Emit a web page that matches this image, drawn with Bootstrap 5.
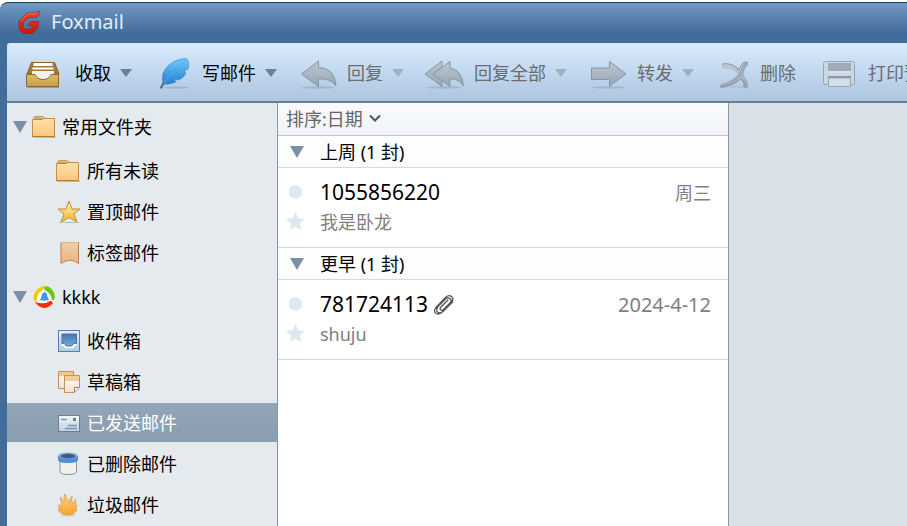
<!DOCTYPE html>
<html lang="zh-CN">
<head>
<meta charset="utf-8">
<meta name="viewport" content="width=device-width, initial-scale=1">
<title>Foxmail</title>
<link href="https://cdn.jsdelivr.net/npm/bootstrap@5.3.0/dist/css/bootstrap.min.css" rel="stylesheet">
<style>
body { font-family: "Noto Sans", "Noto Sans CJK SC", sans-serif; font-size: 18px; line-height: 24px; color: #000; background: #fff; }
svg { display: block; flex: none; }
.app-window { margin-top: 2px; border-top: 1px solid #1f3b58; border-top-left-radius: 8px; background: linear-gradient(#7099c6, #426c99 30px); padding-left: 7px; min-height: calc(100vh - 2px); overflow: hidden; }
.title-bar { height: 40px; padding: 0 10px 3px; gap: 10px; font-size: 20px; color: #e4edf7; }
.tool-bar { height: 60px; padding: 2px 0 0 18px; gap: 20px; background: linear-gradient(#daebfc, #c3daf1 45%, #b0c5de); border-bottom: 2px solid #657e9a; border-top-left-radius: 3px; overflow: hidden; }
.tool-btn { display: flex; align-items: center; flex: none; gap: 10px; padding: 0; border: 0; background: none; color: #000; white-space: nowrap; }
.tool-btn:disabled { color: #6c6c6c; }
.arrow-down { flex: none; border: 6px solid transparent; border-top: 8px solid #6d8098; border-bottom: 0; margin-left: -1px; }
.tool-btn:disabled .arrow-down { border-top-color: #9db1c3; }
.side-bar { flex: 0 0 271px; background: #e5eaee; border-right: 1px solid #8996a3; }
.folder-head { display: flex; align-items: center; gap: 5px; width: 100%; height: 47px; padding: 0 0 0 6px; border: 0; background: none; color: #000; }
.folder-head svg { margin-right: 1px; }
.fold-mark { flex: none; border: 7px solid transparent; border-top: 12px solid #7d8fa2; border-bottom: 0; }
.folder-list li { padding: 1px 0; }
.folder-link { display: flex; align-items: center; gap: 7px; height: 39px; padding-left: 49px; color: #000; text-decoration: none; }
.folder-link.current { background: linear-gradient(#93a5b8, #8a9eb0); color: #fff; }
.mail-pane { flex: 0 1 451px; min-width: 0; background: #fff; border-right: 1px solid #8996a3; }
.sort-bar { height: 33px; padding: 0 8px; border: 0; border-bottom: 1px solid #bdc3c8; background: linear-gradient(#fafbfd, #eff3f7); color: #666; gap: 5px; }
.group-head { height: 32px; padding: 0 12px; gap: 16px; border: 0; border-bottom: 1px solid #d6d8da; background: #fdfdfe; color: #000; }
.mail-item { display: grid; grid-template-columns: 20px 1fr auto; column-gap: 14px; padding: 9px 17px 10px 8px; border-bottom: 1px solid #d6d8da; line-height: 30px; }
.sender { font-size: 21px; line-height: 30px; }
.subject { color: #808080; }
.mail-date { color: #808080; font-size: 20px; padding-top: 2px; line-height: 28px; }
.mail-date.cn { font-size: 18px; }
.flag-btn { display: flex; align-items: center; padding: 0; border: 0; background: none; }
.reading-pane { background: #dae0e8; }
</style>
<script src="https://cdn.jsdelivr.net/npm/bootstrap@5.3.0/dist/js/bootstrap.bundle.min.js"></script>
</head>
<body>
<svg width="0" height="0" class="position-absolute" aria-hidden="true">
  <defs>
    <linearGradient id="gFolder" x1="0" y1="0" x2="0" y2="1"><stop offset="0" stop-color="#ffe0a8"/><stop offset="1" stop-color="#fbc77c"/></linearGradient>
    <linearGradient id="gGrey" x1="0" y1="0" x2="0" y2="1"><stop offset="0" stop-color="#bcc8d3"/><stop offset="1" stop-color="#97a5b3"/></linearGradient>
    <linearGradient id="gBlue" x1="0" y1="0" x2="0" y2="1"><stop offset="0" stop-color="#6dccfb"/><stop offset="1" stop-color="#237fd0"/></linearGradient>
    <linearGradient id="gRed" x1="0" y1="0" x2="0" y2="1"><stop offset="0" stop-color="#f4432c"/><stop offset="1" stop-color="#cc1408"/></linearGradient>
    <linearGradient id="gTray" x1="0" y1="0" x2="0" y2="1"><stop offset="0" stop-color="#dcbd68"/><stop offset="1" stop-color="#c79d4a"/></linearGradient>
    <linearGradient id="gStar" x1="0" y1="0" x2="0" y2="1"><stop offset="0" stop-color="#ffedb0"/><stop offset="1" stop-color="#f3b52c"/></linearGradient>
    <linearGradient id="gTag" x1="0" y1="0" x2="0" y2="1"><stop offset="0" stop-color="#efd0a8"/><stop offset="1" stop-color="#eeb283"/></linearGradient>
    <linearGradient id="gInbox" x1="0" y1="0" x2="0" y2="1"><stop offset="0" stop-color="#4474ae"/><stop offset="1" stop-color="#79aad8"/></linearGradient>
    <linearGradient id="gFrame" x1="0" y1="0" x2="0" y2="1"><stop offset="0" stop-color="#e6eff8"/><stop offset="1" stop-color="#aecbe4"/></linearGradient>
    <linearGradient id="gPaper" x1="0" y1="0" x2="0" y2="1"><stop offset="0" stop-color="#ffffff"/><stop offset="1" stop-color="#f0ded0"/></linearGradient>
    <linearGradient id="gSent" x1="0" y1="0" x2="0" y2="1"><stop offset="0" stop-color="#f3f7fb"/><stop offset="1" stop-color="#bfcfe0"/></linearGradient>
    <linearGradient id="gFire" x1="0" y1="0" x2="0" y2="1"><stop offset="0" stop-color="#fbd68c"/><stop offset="1" stop-color="#f6a32a"/></linearGradient>
    <symbol id="folder" viewBox="0 0 24 24">
      <path d="M1.500 6V3.500Q1.500 1.500 3.500 1.500H10.500Q12.500 1.500 12.500 4V6z" fill="#e2bd78" stroke="#c39a58"/>
      <path d="M1 22.500H24" stroke="#b9bcbf"/>
      <path d="M.5 4.500H10.500L12 3.500H22.500V21.500H.5z" fill="url(#gFolder)" stroke="#c48d48"/>
      <path d="M3 4H10" stroke="#a48b51"/>
      <path d="M0 21.500H23" stroke="#b87a30"/>
    </symbol>
  </defs>
</svg>
<div class="app-window d-flex flex-column">
  <header class="title-bar d-flex align-items-center">
    <svg width="24" height="24" viewBox="0 0 24 24" aria-hidden="true"><path d="M22 1L18 3H10L2 11V19.500L6 23.500H15.500L21.500 17V11.500H14L11 14.500V16H16L13.500 19H8.500L6.500 17V12.500L11.500 7.500H19L22 5z" fill="url(#gRed)" stroke="#7c3345" stroke-width=".8"/><path d="M4 10.500L10.500 4H18L21 2.500" fill="none" stroke="#ff8465" stroke-width=".8"/></svg>
    <span>Foxmail</span>
  </header>

  <div class="tool-bar d-flex align-items-center" role="toolbar" aria-label="邮件操作">
    <button type="button" class="tool-btn">
      <svg width="40" height="34" viewBox="0 0 40 34" aria-hidden="true">
        <path d="M6.500 6.500H29.500L34 18H2z" fill="#a57a35" stroke="#8a6128"/>
        <path d="M8.500 7H27.500V10H8.500z" fill="#fff"/>
        <path d="M7.500 11.500H28.500V13.500H7.500z" fill="#fff"/>
        <path d="M7 15H29V18.500L25 23.500H11L7 18.500z" fill="#f3f1ed"/>
        <path d="M1.500 18.500H10Q12 23.500 18 23.500T26 18.500H33.500V30.500H1.500z" fill="url(#gTray)" stroke="#8f682c"/>
        <path d="M2 31.500H34" stroke="#8e9fb3"/>
      </svg>收取<span class="arrow-down"></span>
    </button>
    <button type="button" class="tool-btn">
      <svg width="40" height="34" viewBox="0 0 40 34" aria-hidden="true">
        <ellipse cx="24" cy="31.500" rx="13" ry="1" fill="#9fb3cc"/>
        <path d="M11 27Q9 19 14 12Q22 3 34 2.500Q38 5 36 13L32 15L34 17Q31 23 26 24L22 23L24 26Q17 29 12 28L15 23L11 27" fill="url(#gBlue)" stroke="#4593cb" stroke-width=".8"/>
        <path d="M10 32Q14 23 20 17T33 5" fill="none" stroke="#58a5d5"/>
        <path d="M8.500 32.500L12 26" stroke="#52718a" stroke-width="2"/>
        <path d="M11 17L13 21" stroke="#2c83c8"/>
      </svg>写邮件<span class="arrow-down"></span>
    </button>
    <button type="button" class="tool-btn" disabled>
      <svg width="40" height="34" viewBox="0 0 40 34" aria-hidden="true"><ellipse cx="21" cy="31.500" rx="17" ry="1.200" fill="#a2b5cb"/><path d="M4.500 18L21.500 5V11.500Q38 12 39 30Q34 22 21.500 23V30.500z" fill="url(#gGrey)" stroke="#8796a6"/></svg>回复<span class="arrow-down"></span>
    </button>
    <button type="button" class="tool-btn" disabled>
      <svg width="40" height="34" viewBox="0 0 40 34" aria-hidden="true"><ellipse cx="20" cy="31.500" rx="18" ry="1.200" fill="#a2b5cb"/><path d="M1 18L18 5V10L11 18L18 25V30.500z" fill="url(#gGrey)" stroke="#8796a6"/><path d="M9 18L26 5.500V12Q38 14 39.500 30Q34 22 26 23V30.500z" fill="url(#gGrey)" stroke="#8796a6"/></svg>回复全部<span class="arrow-down"></span>
    </button>
    <button type="button" class="tool-btn" disabled>
      <svg width="40" height="34" viewBox="0 0 40 34" aria-hidden="true"><ellipse cx="22" cy="31.500" rx="17" ry="1.200" fill="#a2b5cb"/><path d="M4.500 12H22.500V5.500L39 18L22.500 30V23.500H4.500z" fill="url(#gGrey)" stroke="#8796a6"/></svg>转发<span class="arrow-down"></span>
    </button>
    <button type="button" class="tool-btn" disabled>
      <svg width="36" height="34" viewBox="0 0 36 34" aria-hidden="true"><path d="M15 31H32" stroke="#a5b7cb"/><path d="M10 10Q24 10 29 22Q32 26 32 30" fill="none" stroke="url(#gGrey)" stroke-width="4.500" stroke-linecap="round"/><path d="M32.500 8Q30 9 28 16Q23 26 8 30" fill="none" stroke="#9daab7" stroke-width="4" stroke-linecap="round"/><path d="M8 8Q18 6 25 14L28 8Q30 5 34 6.500M6.500 31Q19 30 27 23L30 27V31" fill="none" stroke="#8392a1"/></svg>删除
    </button>
    <button type="button" class="tool-btn" disabled>
      <svg width="42" height="34" viewBox="0 0 42 34" aria-hidden="true"><rect x="7.500" y="5.500" width="31" height="23" rx="2" fill="#cbd7e3" stroke="#98a6b4"/><rect x="12" y="7" width="23" height="8" fill="#9facb8"/><path d="M12 16H35" stroke="#e5ecf3"/><rect x="12" y="20" width="23" height="2" fill="#8896a4"/><path d="M12.500 22H34.500V30.500H12.500z" fill="#d4dfeb" stroke="#98a6b4"/></svg>打印预览
    </button>
  </div>

  <div class="d-flex flex-grow-1">
    <nav class="side-bar" aria-label="文件夹">
      <button type="button" class="folder-head" aria-expanded="true"><span class="fold-mark"></span><svg width="24" height="24" aria-hidden="true"><use href="#folder"/></svg>常用文件夹</button>
      <ul class="folder-list list-unstyled m-0">
        <li><a href="#" class="folder-link"><svg width="24" height="24" aria-hidden="true"><use href="#folder"/></svg>所有未读</a></li>
        <li><a href="#" class="folder-link">
          <svg width="24" height="24" viewBox="0 0 24 24" aria-hidden="true"><path d="M3 22.500H23" stroke="#b9bec3"/><path d="M13 1L16 9H24L18 14L21 22L13 17.500L5 22L8 14L2 9H10z" fill="url(#gStar)" stroke="#bd903a"/></svg>置顶邮件</a></li>
        <li><a href="#" class="folder-link">
          <svg width="24" height="24" viewBox="0 0 24 24" aria-hidden="true"><path d="M5 1.500H22.500V22.500Q14 16 5 22.500z" fill="url(#gTag)" stroke="#bd8050"/><path d="M5 1.500H22" stroke="#d6b78c"/></svg>标签邮件</a></li>
      </ul>
      <button type="button" class="folder-head" aria-expanded="true"><span class="fold-mark"></span>
        <svg width="24" height="24" viewBox="0 0 24 24" aria-hidden="true"><circle cx="12.500" cy="12" r="10.500" fill="#fff"/><path d="M12 1Q2 3 1.500 13Q2 16 4 18Q5 8 10 5.500L14 1z" fill="#f8c900"/><path d="M13 1Q22 2 23 12Q22 17 20 15Q19 8 12 4.500z" fill="#65c918"/><path d="M3 17Q13 20 19 15.500L21 18Q17 23 12 23Q6 22 3 17z" fill="#f02d00"/><path d="M12.500 7Q15.500 8 15.500 12L17 15Q15 16 14 15L12.500 16L10 15Q9 16 8 15L9.500 12Q9.500 8 12.500 7z" fill="#4695ed"/></svg>kkkk</button>
      <ul class="folder-list list-unstyled m-0">
        <li><a href="#" class="folder-link">
          <svg width="24" height="24" viewBox="0 0 24 24" aria-hidden="true"><rect x="2.500" y="1.500" width="21" height="21" fill="url(#gFrame)" stroke="#5b7fa9"/><path d="M6 5H20.500V14.500H17.500L15.500 17H10.500L8.500 14.500H6z" fill="url(#gInbox)" stroke="#48719f"/><path d="M5.500 16H7.500L9.500 18.500H16.500L18.500 16H20.500" stroke="#fff" fill="none" stroke-width="1.500"/></svg>收件箱</a></li>
        <li><a href="#" class="folder-link">
          <svg width="24" height="24" viewBox="0 0 24 24" aria-hidden="true"><path d="M2.500 1.500H17.500V18.500H2.500z" fill="url(#gPaper)" stroke="#be925f"/><path d="M3 2H17V6H3z" fill="#f3c98b"/><path d="M8.500 5.500H23.500V17.500L18.500 22.500H8.500z" fill="url(#gPaper)" stroke="#be925f"/><path d="M9 6H23V11H9z" fill="#f5cd95"/><path d="M18.500 22V17.500H23" fill="#fff" stroke="#b67b37"/></svg>草稿箱</a></li>
        <li><a href="#" class="folder-link current" aria-current="page">
          <svg width="24" height="24" viewBox="0 0 24 24" aria-hidden="true"><rect x="2.500" y="4.500" width="21" height="16" fill="url(#gSent)" stroke="#687e9c"/><path d="M5 8.500H11M12 14.500H21M9 17.500H21" stroke="#7892b9" stroke-width="1.500"/><path d="M17 7H20V10H17z" fill="#4f8e78"/></svg>已发送邮件</a></li>
        <li><a href="#" class="folder-link">
          <svg width="24" height="24" viewBox="0 0 24 24" aria-hidden="true"><path d="M4 8V20Q5 22.500 12 22.500T20.500 20V8z" fill="#f1f0ed" stroke="#8492a0"/><path d="M2.500 4V8.500Q4 10.500 12 10.500T21.500 8.500V4z" fill="#4b8fe7" stroke="#3875c0" stroke-width=".6"/><ellipse cx="12" cy="3.800" rx="9.500" ry="2.800" fill="#8db8e8" stroke="#6490c8" stroke-width=".6"/><ellipse cx="12" cy="4" rx="7.500" ry="2.200" fill="#465a80"/></svg>已删除邮件</a></li>
        <li><a href="#" class="folder-link">
          <svg width="24" height="24" viewBox="0 0 24 24" aria-hidden="true"><path d="M5 22.800H19" stroke="#c5c9cc"/><path d="M2.500 12Q5 13 6 11Q4 7 4.500 4Q6 7 8.500 8.500Q7 4 9 1Q10 6 14 9.500Q13 6 16 3Q15 8 17 11Q19 9 19.500 6Q20 9 19 12Q20 13 21 12Q20 15 20.500 17Q19 22 12 22T2.500 17Q4 14 2.500 12z" fill="url(#gFire)" stroke="#d99a47" stroke-width=".8"/></svg>垃圾邮件</a></li>
      </ul>
    </nav>

    <main class="mail-pane">
      <button type="button" class="sort-bar d-flex align-items-center w-100">排序:日期
        <svg width="14" height="12" viewBox="0 0 14 12" aria-hidden="true"><path d="M2 2.500L7 7.500L12 2.500" fill="none" stroke="#555" stroke-width="2"/></svg></button>
      <button type="button" class="group-head d-flex align-items-center w-100" aria-expanded="true"><span class="fold-mark"></span>上周 (1 封)</button>
      <article class="mail-item">
        <button type="button" class="flag-btn" aria-label="标记已读"><svg width="20" height="20" viewBox="0 0 20 20"><circle cx="9.500" cy="10" r="6.800" fill="#dfe7ef"/></svg></button>
        <div class="sender">1055856220</div>
        <time class="mail-date cn">周三</time>
        <button type="button" class="flag-btn" aria-label="加星标"><svg width="20" height="20" viewBox="0 0 20 20"><path d="M9.500 0L12.300 6.500L19 7L14 11.500L15.500 18L9.500 14.700L3.500 18L5 11.500L0 7L6.700 6.500z" fill="#dfe7ef"/></svg></button>
        <div class="subject">我是卧龙</div>
      </article>
      <button type="button" class="group-head d-flex align-items-center w-100" aria-expanded="true"><span class="fold-mark"></span>更早 (1 封)</button>
      <article class="mail-item">
        <button type="button" class="flag-btn" aria-label="标记已读"><svg width="20" height="20" viewBox="0 0 20 20"><circle cx="9.500" cy="10" r="6.800" fill="#dfe7ef"/></svg></button>
        <div class="sender d-flex align-items-center gap-1">781724113
          <svg width="24" height="24" viewBox="0 0 24 24" role="img" aria-label="附件"><path d="M16 8L8.500 15.500Q7.500 17.500 9 18Q10.500 18.500 12 17L18.500 10.500Q20 8 18 6.500Q16 5 13.500 7L6 14.500Q3.500 18 5.500 20Q8 22 11 19.500L20.500 10M6 14.500L3.500 16Q1.500 19 3.500 21Q6 23 9 21L20 10Q22 6.500 19.500 4.500Q17 2.500 14 5L3.500 16" fill="none" stroke="#50555c" stroke-width="1.300" stroke-linecap="round"/></svg></div>
        <time class="mail-date" datetime="2024-04-12">2024-4-12</time>
        <button type="button" class="flag-btn" aria-label="加星标"><svg width="20" height="20" viewBox="0 0 20 20"><path d="M9.500 0L12.300 6.500L19 7L14 11.500L15.500 18L9.500 14.700L3.500 18L5 11.500L0 7L6.700 6.500z" fill="#dfe7ef"/></svg></button>
        <div class="subject">shuju</div>
      </article>
    </main>
    <section class="reading-pane flex-grow-1" aria-label="阅读窗格"></section>
  </div>
</div>
</body>
</html>
